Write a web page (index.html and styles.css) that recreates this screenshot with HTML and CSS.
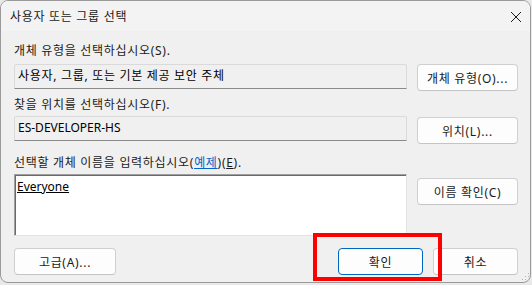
FILE: index.html
```html
<!DOCTYPE html>
<html lang="ko">
<head>
    <meta charset="UTF-8">
    <title>사용자 또는 그룹 선택</title>
    <link rel="stylesheet" href="styles.css">
</head>
<body>

    <div class="window">
        <!-- 제목 표시줄 -->
        <div class="titlebar">
            <span class="title">사용자 또는 그룹 선택</span>
            <svg class="close" width="12" height="12" viewBox="0 0 12 12">
                <path d="M1 1 L11 11 M11 1 L1 11"></path>
            </svg>
        </div>

        <div class="content">
            <!-- 개체 유형 -->
            <section class="group group-type">
                <div class="label">개체 유형을 선택하십시오(S).</div>
                <div class="row">
                    <div class="readonly">사용자, 그룹, 또는 기본 제공 보안 주체</div>
                    <button class="btn">개체 유형(O)...</button>
                </div>
            </section>

            <!-- 위치 -->
            <section class="group group-location">
                <div class="label">찾을 위치를 선택하십시오(F).</div>
                <div class="row">
                    <div class="readonly latin">ES-DEVELOPER-HS</div>
                    <button class="btn">위치(L)...</button>
                </div>
            </section>

            <!-- 개체 이름 -->
            <section class="group group-names">
                <div class="label">선택할 개체 이름을 입력하십시오(<a class="link">예제</a>)(<u>E</u>).</div>
                <div class="row">
                    <div class="name-box latin"><u>Everyone</u></div>
                    <button class="btn">이름 확인(C)</button>
                </div>
            </section>

            <div class="footer">
                <button class="btn btn-wide">고급(A)...</button>
                <div class="footer-actions">
                    <button class="btn btn-small primary">확인</button>
                    <button class="btn btn-small">취소</button>
                </div>
            </div>
        </div>

        <!-- 크기 조정 손잡이 -->
        <svg class="grip" width="9" height="9" viewBox="0 0 9 9">
            <rect x="7" y="1" width="1" height="1"></rect>
            <rect x="4" y="4" width="1" height="1"></rect>
            <rect x="7" y="4" width="1" height="1"></rect>
            <rect x="1" y="7" width="1" height="1"></rect>
            <rect x="4" y="7" width="1" height="1"></rect>
            <rect x="7" y="7" width="1" height="1"></rect>
        </svg>

        <!-- 강조 표시 (빨간 사각형) -->
        <div class="highlight"></div>
    </div>

</body>
</html>
```

FILE: styles.css
```css
/* 색상 */
:root {
    --bg-window: #f0f0f0;
    --bg-title: #f3f3f3;
    --color-text: #1a1a1a;
    --border-control: #d0d0d0;
    --color-accent: #0067c0;
    --font-family: "Noto Sans", "Noto Sans CJK KR", sans-serif;
}

html, body {
    margin: 0;
    padding: 0;
}

body {
    font-family: var(--font-family);
    font-size: 12px;
    letter-spacing: 0.7px; /* 맑은 고딕 폭에 맞춤 */
    color: var(--color-text);
    background-color: #e9e9e9;
    width: 532px;
    height: 285px;
    overflow: hidden;
}

.latin {
    letter-spacing: 0;
}

.window {
    position: relative;
    box-sizing: border-box;
    width: 531px;
    height: 283px;
    background-color: var(--bg-window);
    border: 1px solid #9a9a9a;
    border-radius: 8px;
    overflow: hidden;
}

/* --- 제목 표시줄 --- */
.titlebar {
    display: flex;
    align-items: center;
    justify-content: space-between;
    height: 30px;
    padding: 0 8px 0 9px;
    background-color: var(--bg-title);
}

.title {
    line-height: 18px;
    padding-top: 1px;
}

.close {
    stroke: #1a1a1a;
    stroke-width: 1;
    fill: none;
    margin-top: 1px;
}

/* --- 본문 --- */
.content {
    padding: 0 12px 0 13px;
}

.label {
    height: 18px;
    line-height: 18px;
    white-space: nowrap;
}

.row {
    display: flex;
    align-items: flex-start;
    gap: 10px;
}

.group-type { padding-top: 11px; }
.group-type .row { margin-top: 4px; }

.group-location { padding-top: 5px; }
.group-location .row { margin-top: 2px; }
.group-location .btn { margin-top: 1px; }

.group-names { padding-top: 10px; }
.group-names .row { margin-top: 2px; }
.group-names .btn { margin-top: 4px; }

/* 읽기 전용 입력 상자 */
.readonly {
    box-sizing: border-box;
    flex: 1;
    height: 25px;
    line-height: 22px;
    padding: 0 3px;
    border: 1px solid #dadada;
    border-bottom-color: #8a8a8a;
    border-radius: 2px 2px 0 0;
    background-color: #f0f0f0;
    color: #000;
    white-space: nowrap;
}

/* 이름 입력 상자 (오목한 테두리) */
.name-box {
    box-sizing: border-box;
    flex: 1;
    height: 62px;
    padding: 3px 2px;
    line-height: 18px;
    background-color: #fff;
    border: 1px solid;
    border-color: #a0a0a0 #e3e3e3 #e3e3e3 #a0a0a0;
    box-shadow: inset 1px 1px 0 #696969;
    color: #000;
}

.link {
    color: #0066cc;
    text-decoration: underline;
}

/* 버튼 */
.btn {
    box-sizing: border-box;
    flex-shrink: 0;
    width: 101px;
    height: 27px;
    padding: 0;
    font-family: var(--font-family);
    font-size: 12px;
    letter-spacing: 0.7px;
    color: var(--color-text);
    background-color: #fdfdfd;
    border: 1px solid var(--border-control);
    border-bottom-color: #c4c4c4;
    border-radius: 4px;
}

.btn.primary {
    border-color: var(--color-accent);
}

.btn-wide {
    width: 102px;
}

.btn-small {
    width: 85px;
}

/* --- 하단 버튼 --- */
.footer {
    display: flex;
    justify-content: space-between;
    margin-top: 12px;
}

.footer-actions {
    display: flex;
    gap: 10px;
}

.grip {
    position: absolute;
    right: 0;
    bottom: 1px;
    fill: #b5b5b5;
}

/* 빨간 강조 사각형 */
.highlight {
    position: absolute;
    left: 312px;
    top: 232px;
    width: 129px;
    height: 48px;
    box-sizing: border-box;
    border: 4px solid #ff0000;
}
```
